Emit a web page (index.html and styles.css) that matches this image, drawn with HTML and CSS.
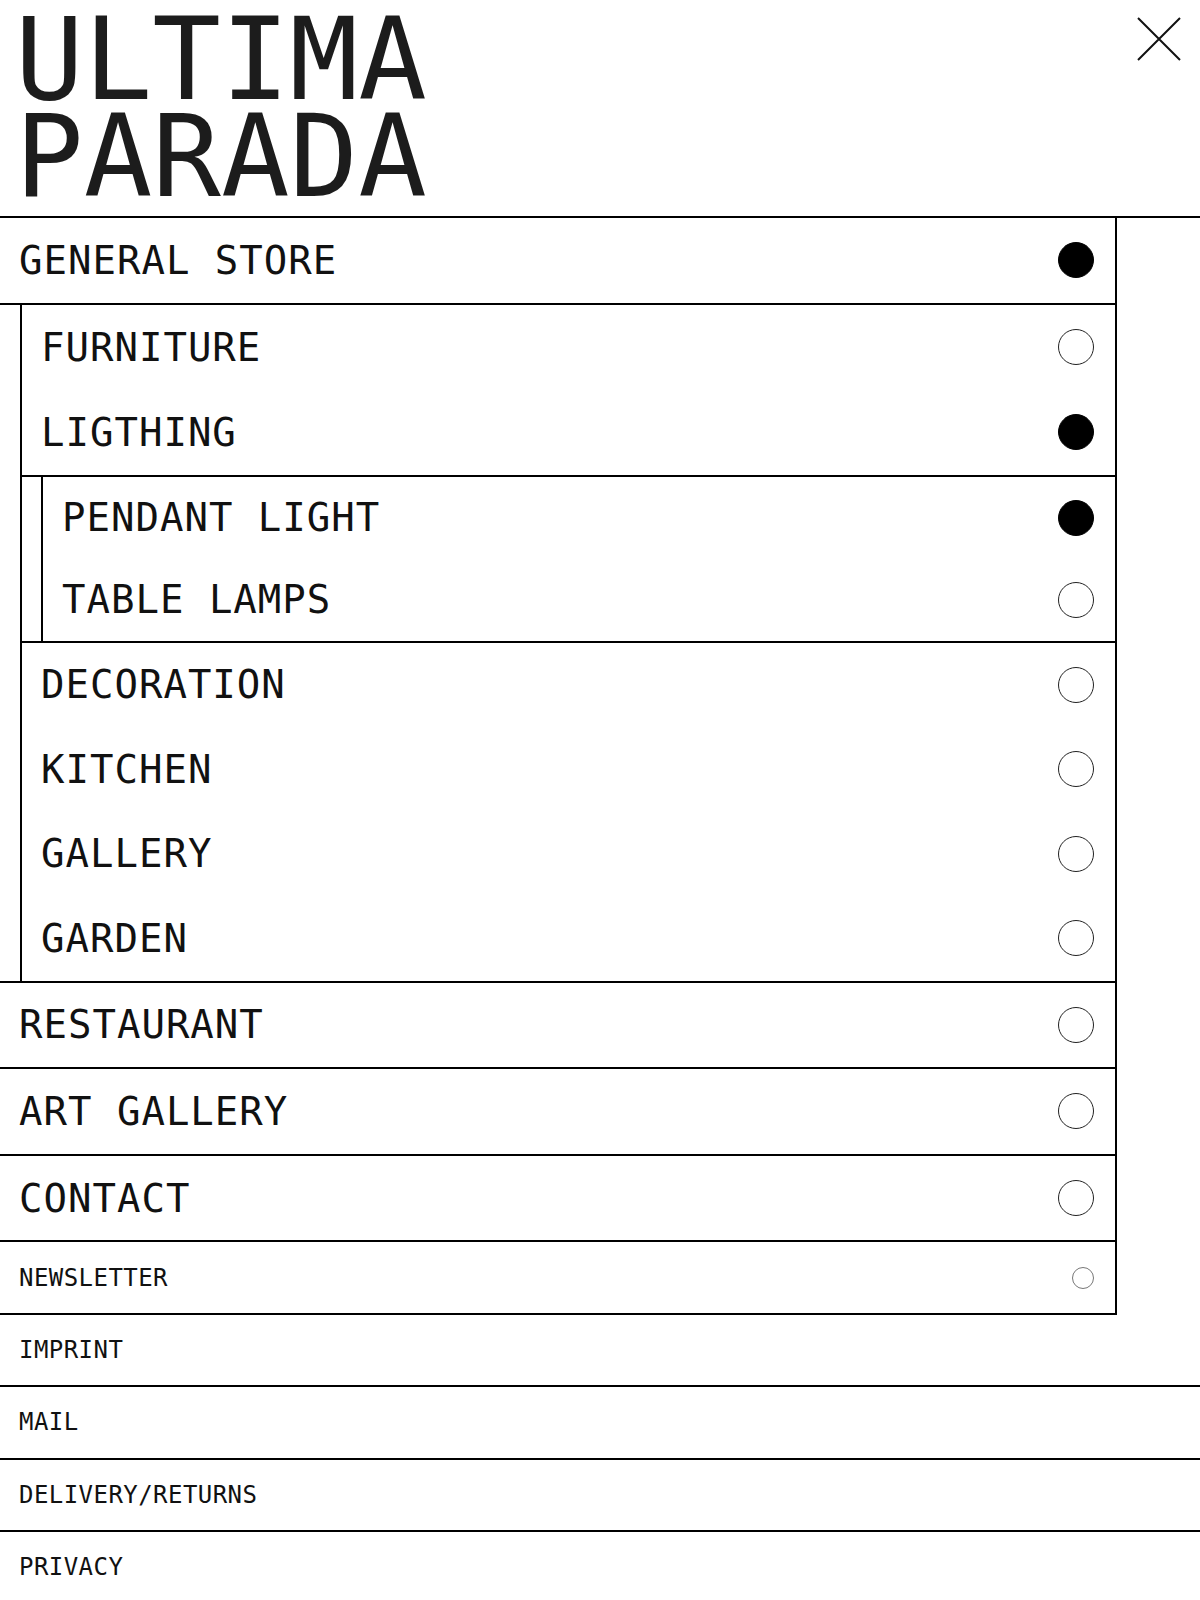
FILE: index.html
```html
<!DOCTYPE html>
<html lang="en">
<head>
<meta charset="utf-8">
<title>Ultima Parada</title>
<link rel="stylesheet" href="styles.css">
</head>
<body>
<header class="header">
  <h1 class="logo">ULTIMA<br>PARADA</h1>
  <button class="close" aria-label="Close">
    <svg width="44" height="44" viewBox="0 0 44 44"><path d="M1 1 L43 43 M43 1 L1 43" stroke="#111" stroke-width="2" fill="none"/></svg>
  </button>
</header>
<div class="nav">
  <nav class="menu">
    <a class="row main" href="#"><span class="label">GENERAL STORE</span><span class="dot on"></span></a>
    <div class="group">
      <div class="group-inner">
        <a class="row upper" href="#"><span class="label">FURNITURE</span><span class="dot"></span></a>
        <a class="row upper" href="#"><span class="label">LIGTHING</span><span class="dot on"></span></a>
        <div class="subgroup">
          <div class="subgroup-inner">
            <a class="row nested" href="#"><span class="label">PENDANT LIGHT</span><span class="dot on"></span></a>
            <a class="row nested" href="#"><span class="label">TABLE LAMPS</span><span class="dot"></span></a>
          </div>
        </div>
        <a class="row" href="#"><span class="label">DECORATION</span><span class="dot"></span></a>
        <a class="row" href="#"><span class="label">KITCHEN</span><span class="dot"></span></a>
        <a class="row" href="#"><span class="label">GALLERY</span><span class="dot"></span></a>
        <a class="row" href="#"><span class="label">GARDEN</span><span class="dot"></span></a>
      </div>
    </div>
    <a class="row main" href="#"><span class="label">RESTAURANT</span><span class="dot"></span></a>
    <a class="row main" href="#"><span class="label">ART GALLERY</span><span class="dot"></span></a>
    <a class="row main" href="#"><span class="label">CONTACT</span><span class="dot"></span></a>
    <a class="row small" href="#"><span class="label">NEWSLETTER</span><span class="dot mini"></span></a>
  </nav>
  <a class="row small" href="#"><span class="label">IMPRINT</span></a>
  <a class="row small" href="#"><span class="label">MAIL</span></a>
  <a class="row small" href="#"><span class="label">DELIVERY/RETURNS</span></a>
  <a class="row small" href="#"><span class="label">PRIVACY</span></a>
</div>
</body>
</html>
```

FILE: styles.css
```css
* { box-sizing: border-box; }

body {
  margin: 0;
  background: #fff;
  color: #111;
  font-family: "DejaVu Sans Mono", "Liberation Mono", monospace;
}

.header {
  display: flex;
  justify-content: space-between;
  align-items: flex-start;
  padding: 11px 19px 11px 15px;
  border-bottom: 2px solid #000;
}

.logo {
  margin: 0;
  font-weight: 400;
  font-size: 114px;
  line-height: 97px;
  color: #1c1c1c;
  letter-spacing: 0;
}

.close {
  margin-top: 6px;
  padding: 0;
  border: 0;
  background: none;
  width: 44px;
  height: 44px;
  display: block;
}
.close svg { display: block; }

.menu {
  width: 1117px;
  border-right: 2px solid #000;
}

.row {
  display: flex;
  align-items: center;
  justify-content: space-between;
  height: 84.5px;
  padding: 0 21px 0 19px;
  font-size: 39px;
  letter-spacing: 1px;
  color: #111;
  text-decoration: none;
  white-space: pre;
}

.row.upper { height: 85px; }
.row.nested { height: 82px; }

.row.main { height: 86.6px; border-bottom: 2px solid #000; }

.row.small {
  height: 72.4px;
  font-size: 24px;
  letter-spacing: 0.45px;
  border-bottom: 2px solid #000;
}

.group { border-bottom: 2px solid #000; }

.group-inner {
  margin-left: 20px;
  border-left: 2px solid #000;
}

.subgroup {
  border-top: 2px solid #000;
  border-bottom: 2px solid #000;
}

.subgroup-inner {
  margin-left: 19px;
  border-left: 2px solid #000;
}

.dot {
  width: 36px;
  height: 36px;
  border-radius: 50%;
  border: 1.5px solid #222;
  flex: none;
}
.dot.on { background: #000; border-color: #000; }

.dot.mini {
  width: 22px;
  height: 22px;
  border: 1.5px solid #777;
}
```
